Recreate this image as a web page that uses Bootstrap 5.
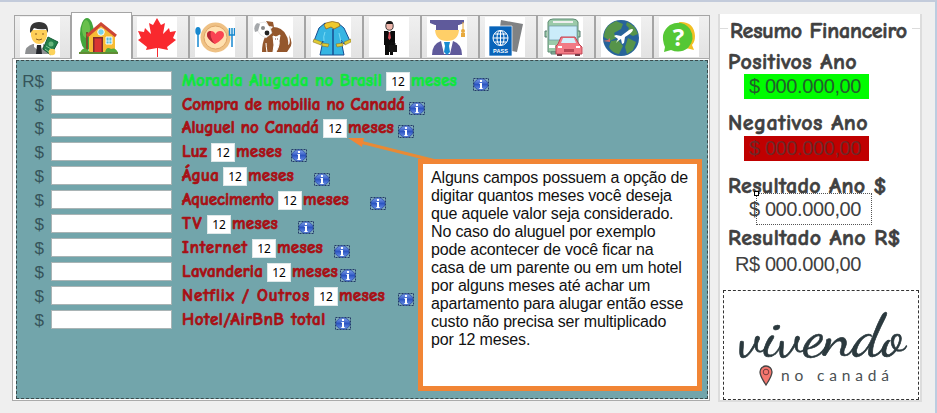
<!DOCTYPE html>
<html lang="pt-BR">
<head>
<meta charset="utf-8">
<meta name="viewport" content="width=device-width, initial-scale=1">
<title>Resumo Financeiro</title>
<link href="https://cdn.jsdelivr.net/npm/bootstrap@5.3.0/dist/css/bootstrap.min.css" rel="stylesheet">
<style>
body{width:937px;height:413px;overflow:hidden;background:#efefef;font-family:"Liberation Sans",Arial,sans-serif;line-height:1;border-top:2px solid #c3cbdb;border-right:2px solid #bccde0}
.comic{font-family:"Comic Sans MS","Comic Neue","Noto Sans",sans-serif;font-weight:700;white-space:nowrap;display:inline-block;-webkit-text-stroke:.7px currentColor}
.workarea{width:698px;margin-left:12px;padding-top:10px}
.tabstrip{height:46px;padding-left:2px;align-items:flex-end!important}
.tabstrip .nav-item{width:58px;height:43px;border:1px solid #a5a5a5;border-width:1px 1px 0;background:linear-gradient(#f0f0f0,#e2e2e2);padding:1px 0 0 5px}
.tabstrip .nav-item:first-child{width:57px}
.tabstrip .nav-item:last-child{width:57px}
.tabstrip .nav-item.current{width:61px;height:47px;background:#fff;padding:4px 0 0 7px;position:relative;margin-bottom:-1px}
.tabstrip .nav-item.current + .nav-item{width:57px;padding-left:4px}
.tabstrip svg{display:block;width:40px;height:40px;background:#fff}
.pane{height:343px;background:#fff;border:1px solid #aaa;padding:1px 1px 1px 3px}
.pane-in{height:339px;background:#72a5ab;border:1px dashed #394a4c;padding-top:10px;position:relative}
.line{height:24px}
.line:nth-child(-n+2){height:23.500px}
.cur{width:28px;text-align:right;font-size:17px;color:#36545a;padding:2px 1px 0 0}
.field{width:121px;height:19px;margin-left:6px;background:#fff;border:1px solid #a9b4b5}
.desc{margin-left:10px}
.line .comic{font-size:17px;line-height:20px;color:#a80f14}
.line.on .comic{color:#0fe63c}
.months{width:24px;height:19px;margin:1px 1px 0 4px;background:#fff;border:1px solid #dfe8e9;font:12px/17px "Noto Sans",sans-serif;text-align:center;color:#000}
.info{width:16px;height:13px;margin-top:7px;flex:none}
.note{left:401px;top:98px;width:284px;height:232px;background:#fff;border:5px solid #f18535;padding:5px 0 0 8px;font-size:16px;line-height:18px;letter-spacing:-.17px;color:#111;white-space:nowrap}
.arrow{left:325px;top:72px;width:110px;height:34px}
.summary{width:204px;height:388px;margin:12px 0 0 8px;background:#fff;border:solid #dcdcdc;border-width:0 2px 2px;padding:5px 0 0 8px;color:#404040;position:relative}
.summary:before,.summary:after{content:"";position:absolute;top:14px;width:8px;height:1px;background:#dcdcdc;left:0}
.summary:after{left:auto;right:0}
.summary .comic{font-size:22px;line-height:24px;display:block;-webkit-text-stroke-width:.6px}
.summary h1{margin:0 0 0 2px}
.summary h2{margin:0}
.gap-pos{padding-top:7px}
.gap-neg{padding-top:12px}
.gap-res{padding-top:13px}
.gap-real{padding-top:4px}
.val{width:125px;height:25px;margin-left:16px;padding-right:8px;text-align:right;font-size:20px;line-height:25px;letter-spacing:-.4px;white-space:nowrap;color:#404040}
.val.pos{background:#00fc00;color:#20602a}
.val.neg{background:#c00000;color:#6e2828;margin-top:1px}
.val.real{margin-top:2px}
.val.dollar{margin-top:-1px}
.sel{left:12px;top:-4px;width:116px;height:32px;border:1px dotted #555}
.sel i{position:absolute;left:-3px;top:-3px;width:5px;height:5px;border:1px solid #000;background:#fff}
.logo{width:196px;height:110px;border:1px dashed #333;margin:13px 0 0 -5px}
.logo svg{display:block}
.brand{font-family:"Dancing Script","Sacramento",Lato,sans-serif}
</style>
<script src="https://cdn.jsdelivr.net/npm/bootstrap@5.3.0/dist/js/bootstrap.bundle.min.js"></script>
</head>
<body>
<svg width="0" height="0" class="position-absolute"><defs>
<linearGradient id="blu" x2="0" y2="1"><stop stop-color="#83a4ec"/><stop offset=".5" stop-color="#2c55c2"/><stop offset="1" stop-color="#6e95ea"/></linearGradient>
<symbol id="info" viewBox="0 0 16 13"><rect x=".5" y=".5" width="15" height="12" fill="#7fabb8" stroke="#233a66" stroke-dasharray="2 1"/><ellipse cx="8" cy="6.5" rx="7" ry="5.7" fill="url(#blu)" stroke="#23439c" stroke-width=".7"/><path d="M7 2h2v2H7zM6.500 5H9v5h.7v1H6.300v-1H7V6h-.5z" fill="#fff"/></symbol>
</defs></svg>
<div class="d-flex">
<main class="workarea">
<nav class="nav tabstrip d-flex flex-nowrap">
<div class="nav-item"><svg viewBox="0 0 40 40"><path d="M5 37q0-8 8-10h10q7 2 7 10z" fill="#8e9092"/><path d="M14 24h9v6l-4 4-5-4z" fill="#fff"/><path d="M17 28h4l1 9h-6z" fill="#24272c"/><path d="M11 13h16v6q-2 8-8 8t-8-8z" fill="#ffcf58"/><path d="M10 16q-1-11 9-11t9 11l-2-4q-7 1-12-1l-2 3z" fill="#353535"/><path d="M15 17h2m5 0h2m-8 5q3 2 6 0" stroke="#8a5a20" fill="none"/><path d="m28 20 10 5-7 13-8-6z" fill="#23804b" stroke="#155c34"/><circle cx="31" cy="27" r="2.5" fill="#67b67c"/><path d="m26 29 5 3m-6 0 4 3" stroke="#82c792"/><circle cx="32" cy="35" r="3.3" fill="#fbd25b"/></svg></div>
<div class="nav-item current"><svg viewBox="0 0 40 40"><ellipse cx="8" cy="17" rx="7" ry="16" fill="#43a53c"/><ellipse cx="7" cy="12" rx="4" ry="9" fill="#69c04c"/><path d="M8 15v20" stroke="#795030" stroke-width="2"/><path d="M10 19 22 7l14 12v17H10z" fill="#f7bc35"/><path d="M8 19 22 7l15 12" fill="none" stroke="#cc4634" stroke-width="3"/><path d="M14 20h10v16H14z" fill="#7d2c2a"/><path d="M15.500 21.500h7V35h-7z" fill="#d93532"/><circle cx="22" cy="15" r="3.300" fill="#78d3e7" stroke="#fff"/><path d="M27 20h6v7h-6z" fill="#55bddb" stroke="#fff"/><path d="M30 20v7m-3-3h6" stroke="#fff" stroke-width=".7"/><path d="M1 36q2-6 7-4l4 4m14 0q1-7 6-4 5-2 7 4z" fill="#55a83c"/><path d="M0 35h39v2H0z" fill="#608b35"/></svg></div>
<div class="nav-item"><svg viewBox="0 0 40 40"><path d="m20 1 4 7 4-2-2 11 6-6 1 4 6-1-3 7 3 2-9 7 1 3-10-2v9h-1v-9L9 33l1-3-9-7 3-2-3-7 6 1 1-4 6 6-2-11 4 2z" fill="#f9292e"/></svg></div>
<div class="nav-item"><svg viewBox="0 0 40 40"><circle cx="20.500" cy="20.500" r="15" fill="#efc184"/><circle cx="20.500" cy="20.500" r="11.500" fill="#ffe0af" stroke="#dda668"/><path d="M20 27q-8-5-8-9 0-4 4-4 3 0 4.500 3Q22 14 25 14q4 0 4 4 0 4-9 9" fill="#fa4352"/><path d="M16 14q-4 0-4 4 0 4 8 9-6-7-4-13" fill="#b52735"/><ellipse cx="3" cy="14" rx="2.700" ry="4" fill="#1788cf"/><path d="M3 17v13M37 17v13M34.500 11v7h5v-7M37 11v7" stroke="#1788cf" stroke-width="1.500" fill="none"/></svg></div>
<div class="nav-item"><svg viewBox="0 0 40 40"><path d="M9 35q0-9 3-15l5-7 3-3q9 0 13 8 3 4 2 10 3-1 1-10 5 9 0 14l-2 3z" fill="#94572d"/><path d="M6 6l6-1 5 5 2 6-6 5q-6-2-9-8z" fill="#fff" stroke="#ccc" stroke-width=".5"/><path d="M4 6Q0 9 2 15l3-1 2-7z" fill="#a5a8ab"/><path d="m13 4 7 1 1 5-5-1z" fill="#94572d"/><circle cx="10" cy="11" r="2" fill="#888"/><circle cx="14" cy="16" r="2.400" fill="#222"/><path d="M14 35q-1-6-1-9M20 35l1-7-1-9 3 1 4-2-1 6q1 4-3 11z" stroke="#fff" fill="#fff"/><path d="M22 22h1m1 0h1" stroke="#744"/></svg></div>
<div class="nav-item"><svg viewBox="0 0 40 40"><path d="M14 6 8 11 3 24l7 3 2-3-3 14h24l-3-15 3 4 6-3-6-13-6-5q-7 4-13 0z" fill="#36b5e3" stroke="#184e91"/><path d="M15 6q6-3 13 0l1 3-6 3-3-2-5 2-2-4z" fill="#efc92d" stroke="#906a22" stroke-width=".8"/><path d="m3 22 8 3-1 3-8-3zm30 3 7-3v3l-6 3zM11 26l7 1-1 3-6-1zm14 1 7-1v3l-6 1z" fill="#dfcb35" stroke="#806824" stroke-width=".5"/><path d="M22 12v26" stroke="#184e91" stroke-width="1.500"/><path d="M14 15q-2 5-1 9m15-8 2 9" stroke="#79daf4" fill="none"/></svg></div>
<div class="nav-item"><svg viewBox="0 0 40 40"><ellipse cx="20.500" cy="9" rx="3.700" ry="4.200" fill="#edb6ab" stroke="#151515" stroke-width=".8"/><path d="M17 7q0-3 3.500-3T24 7z" fill="#151515"/><path d="M15 14h11v14h-2v10h-3V28h-1v10h-4V28h-1z" fill="#0b0b0b"/><path d="M19 14h3l-1.500 2z" fill="#fff"/><path d="m20 15 1 0 1 6-1.500 2-1.500-2z" fill="#d84d5b"/><path d="M20 28h8v7h-8z" fill="#151515"/><path d="M22 28v-2h4v2" stroke="#151515" fill="none"/></svg></div>
<div class="nav-item"><svg viewBox="0 0 40 40"><path d="M3 3h34v3l-5 2H8L3 6z" fill="#5f5a9b"/><path d="M9 8h22v6H9z" fill="#5f5a9b"/><path d="M8 13h24q-1 11-12 11T8 13" fill="#ffcf68"/><path d="M5 38q0-11 9-14l6 8 6-8q9 3 9 14z" fill="#5f5a9b"/><path d="m14 24 6 3 6-3-3 13h-6z" fill="#fff"/><path d="M17 25h6l-1 4 1 6-3 3-3-3 1-6z" fill="#178bd1"/><path d="M36 5v9" stroke="#e8aa3f"/><circle cx="36" cy="14" r="2" fill="#e8aa3f"/><path d="M34 16h4v4h-4z" fill="#e8aa3f"/></svg></div>
<div class="nav-item"><svg viewBox="0 0 40 40"><path d="m16 3 22 4-6 28-20-4z" fill="#808284"/><path d="M4 9h23v30H4z" fill="#0864ba" stroke="#fff" stroke-width=".7"/><g fill="none" stroke="#fff"><circle cx="15.500" cy="21" r="7.500"/><ellipse cx="15.500" cy="21" rx="3.500" ry="7.500"/><path d="M8 21h15M9.500 17h12M9.500 25h12M15.500 13.500v15"/></g><text x="15.500" y="36" font-size="5.500" font-weight="700" text-anchor="middle" fill="#fff" textLength="15">PASS</text></svg></div>
<div class="nav-item"><svg viewBox="0 0 40 40"><path d="M5 5q1-3 5-3h20q4 0 5 3v30H5z" fill="#9bcaa9" stroke="#5d8b72"/><path d="M6 9h28v14H6z" fill="#cbecfa" stroke="#6b9aa0" stroke-width=".7"/><path d="M10 5h20" stroke="#eee" stroke-width="2"/><path d="M4 14H2v6h2m31-6h2v6h-2M8 35h5v2H8z" stroke="#557c70" fill="#9bcaa9"/><path d="M6 28h6v3H6z" fill="#fff"/><path d="M15 27 18 20h14l4 7 3 3v7H13v-8z" fill="#f27b85" stroke="#bf4655"/><path d="M18 26 20 21h11l2 5z" fill="#d3f0fb"/><path d="M14 37h5v2h-5zm18 0h5v2h-5z" fill="#733a46"/><path d="M15 30h4m14 0h4" stroke="#fff" stroke-width="2"/><path d="M21 32h10v3H21z" fill="#ba4655"/></svg></div>
<div class="nav-item"><svg viewBox="0 0 40 40"><circle cx="20" cy="21" r="18" fill="#27639a"/><path d="m8 8 7-4 7 3-2 5-7 4 2 5-6 3-6-4q0-7 5-12zm18-3q8 3 11 12l-5 2-6-3 2-5-3-3zM10 24l7-1 5 6-4 8q-7-1-10-7zm17-3 8 4-3 8-6 4-2-7z" fill="#56944a"/><path d="m15 26 2-4-4-3 2-1 5 1 8-6q4-2 4 0-1 3-8 7l-1 6-2 1-1-5-3 2z" fill="#fff"/><path d="m2 24 5-1 2-2v4z" fill="#d56d64"/></svg></div>
<div class="nav-item"><svg viewBox="0 0 40 40"><path d="M20 5q15-1 16 14 0 6-3 9l2 5-8-2z" fill="#f2bf23"/><path d="M6 30Q0 16 11 8q12-6 20 4 6 10-2 19-8 6-17 2l-7 2z" fill="#55c735"/><text x="19.500" y="29" text-anchor="middle" font-size="24" font-weight="700" fill="#fff" font-family="Open Sans,sans-serif">?</text></svg></div>
</nav>
<section class="pane"><div class="pane-in">
<div>
<div class="line on d-flex"><div class="cur">R$</div><div class="field"></div><span class="comic desc" data-fit="200">Moradia Alugada no Brasil</span><div class="months">12</div><span class="comic" data-fit="46">meses</span><svg class="info" data-gap="16"><use href="#info"/></svg></div>
<div class="line d-flex"><div class="cur">$</div><div class="field"></div><span class="comic desc" data-fit="223">Compra de mobilia no Canadá</span><svg class="info" data-gap="4"><use href="#info"/></svg></div>
<div class="line d-flex"><div class="cur">$</div><div class="field"></div><span class="comic desc" data-fit="137">Aluguel no Canadá</span><div class="months">12</div><span class="comic" data-fit="46">meses</span><svg class="info" data-gap="4"><use href="#info"/></svg></div>
<div class="line d-flex"><div class="cur">$</div><div class="field"></div><span class="comic desc" data-fit="25">Luz</span><div class="months">12</div><span class="comic" data-fit="46">meses</span><svg class="info" data-gap="9"><use href="#info"/></svg></div>
<div class="line d-flex"><div class="cur">$</div><div class="field"></div><span class="comic desc" data-fit="37">Água</span><div class="months">12</div><span class="comic" data-fit="46">meses</span><svg class="info" data-gap="20"><use href="#info"/></svg></div>
<div class="line d-flex"><div class="cur">$</div><div class="field"></div><span class="comic desc" data-fit="92">Aquecimento</span><div class="months">12</div><span class="comic" data-fit="46">meses</span><svg class="info" data-gap="21"><use href="#info"/></svg></div>
<div class="line d-flex"><div class="cur">$</div><div class="field"></div><span class="comic desc" data-fit="21">TV</span><div class="months">12</div><span class="comic" data-fit="46">meses</span><svg class="info" data-gap="20"><use href="#info"/></svg></div>
<div class="line d-flex"><div class="cur">$</div><div class="field"></div><span class="comic desc" data-fit="66">Internet</span><div class="months">12</div><span class="comic" data-fit="46">meses</span><svg class="info" data-gap="11"><use href="#info"/></svg></div>
<div class="line d-flex"><div class="cur">$</div><div class="field"></div><span class="comic desc" data-fit="81">Lavanderia</span><div class="months">12</div><span class="comic" data-fit="46">meses</span><svg class="info" data-gap="2"><use href="#info"/></svg></div>
<div class="line d-flex"><div class="cur">$</div><div class="field"></div><span class="comic desc" data-fit="128">Netflix / Outros</span><div class="months">12</div><span class="comic" data-fit="46">meses</span><svg class="info" data-gap="13"><use href="#info"/></svg></div>
<div class="line d-flex"><div class="cur">$</div><div class="field"></div><span class="comic desc" data-fit="144">Hotel/AirBnB total</span><svg class="info" data-gap="9"><use href="#info"/></svg></div>
</div>
<svg class="arrow position-absolute" viewBox="0 0 110 34"><path d="M14 8 98 29" stroke="#e88a35" stroke-width="3"/><path d="M6 5 22 5 20 14z" fill="#f18535"/></svg>
<div class="note position-absolute">Alguns campos possuem a opção de<br>digitar quantos meses você deseja<br>que aquele valor seja considerado.<br>No caso do aluguel por exemplo<br>pode acontecer de você ficar na<br>casa de um parente ou em um hotel<br>por alguns meses até achar um<br>apartamento para alugar então esse<br>custo não precisa ser multiplicado<br>por 12 meses.</div>
</div></section>
</main>
<aside class="summary">
<h1 class="comic" data-fit="177">Resumo Financeiro</h1>
<h2 class="comic gap-pos" data-fit="129">Positivos Ano</h2>
<div class="val pos">$ 000.000,00</div>
<h2 class="comic gap-neg" data-fit="140">Negativos Ano</h2>
<div class="val neg">$ 000.000,00</div>
<h2 class="comic gap-res" data-fit="159">Resultado Ano $</h2>
<div class="val dollar position-relative">$ 000.000,00<span class="sel position-absolute"><i></i></span></div>
<h2 class="comic gap-real" data-fit="173">Resultado Ano R$</h2>
<div class="val real d-flex justify-content-end">R$ 000.000,00</div>
<div class="logo"><svg width="194" height="108" viewBox="0 0 194 108"><text class="brand" x="15" y="64" font-size="58" fill="#2b393e" stroke="#2b393e" stroke-width=".6" textLength="166" lengthAdjust="spacingAndGlyphs">vivendo</text><path d="M42 94q-6-9-6-13a6 6 0 0 1 12 0q0 4-6 13z" fill="#f4766e" stroke="#444" stroke-width="1.300"/><circle cx="42" cy="81" r="2.800" fill="none" stroke="#753c3d"/><text x="57" y="90" font-family="Lato,sans-serif" font-size="15.500" fill="#4a5053" textLength="108">no canadá</text></svg></div>
</aside>
</div>
<script>
/* Spread each caption over its column width, and space the help icons. */
document.querySelectorAll('[data-fit]').forEach(function(e){
  var w=+e.dataset.fit,c=document.createElement('span');
  c.style.cssText='white-space:nowrap;display:inline-block';
  c.textContent=e.textContent;e.textContent='';e.appendChild(c);
  e.style.letterSpacing=(w-c.getBoundingClientRect().width)/c.textContent.length+'px';
  e.style.width=w+'px';
});
document.querySelectorAll('[data-gap]').forEach(function(e){e.style.marginLeft=e.dataset.gap+'px';});
</script>
</body>
</html>
